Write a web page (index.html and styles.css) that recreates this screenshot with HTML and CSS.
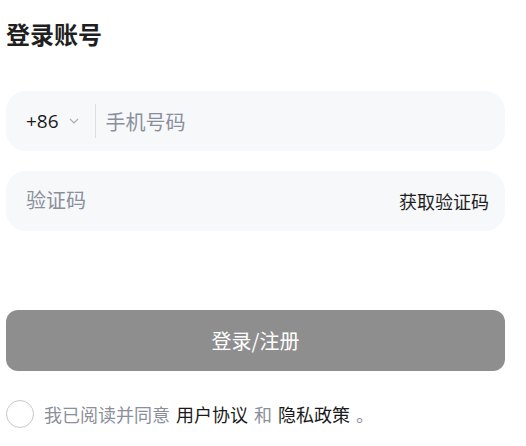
FILE: index.html
```html
<!DOCTYPE html>
<html lang="zh-CN">
<head>
    <meta charset="utf-8">
    <title>登录账号</title>
    <meta name="viewport" content="width=device-width, initial-scale=1">
    <link rel="stylesheet" href="styles.css">
</head>
<body>
    <section class="login">
        <h1>登录账号</h1>
        <form action="#">
            <div class="field">
                <span class="area-code">+86
                    <svg class="chevron" width="10" height="6" viewBox="0 0 10 6"><path d="M1 1l4 4 4-4" fill="none" stroke="#a9acb3" stroke-width="1.2"/></svg>
                </span>
                <span class="divider"></span>
                <input type="tel" placeholder="手机号码">
            </div>
            <div class="field">
                <input type="text" placeholder="验证码" class="code-input">
                <button type="button" class="get-code">获取验证码</button>
            </div>
            <button type="submit" class="submit">登录/注册</button>
            <label class="agree">
                <span class="circle"></span>
                <span class="muted">我已阅读并同意</span>
                <span>用户协议</span>
                <span class="muted">和</span>
                <span>隐私政策</span>
                <span class="muted">。</span>
            </label>
        </form>
    </section>
</body>
</html>
```

FILE: styles.css
```css
* {
    margin: 0;
    padding: 0;
    box-sizing: border-box;
}

body {
    font-family: "Noto Sans CJK SC", "Noto Sans", sans-serif;
    background-color: #fff;
    color: #1a1a1a;
}

.login {
    padding: 14px 21px 0 6px;
}

h1 {
    font-size: 24px;
    font-weight: 700;
    line-height: 40px;
    color: #1f1f1f;
}

form {
    margin-top: 37px;
}

/** Input rows **/
.field {
    display: flex;
    align-items: center;
    height: 60px;
    border-radius: 20px;
    background-color: #f7f8fa;
    padding: 0 16px 0 20px;
    margin-bottom: 20px;
}

.field input {
    flex: 1;
    min-width: 0;
    border: 0;
    outline: 0;
    background: transparent;
    font-family: inherit;
    font-size: 20px;
    color: #1a1a1a;
}

.field input::placeholder {
    color: #8a8f9c;
}

.code-input {
    margin-bottom: 4px;
}

.area-code {
    display: flex;
    align-items: center;
    gap: 10px;
    font-family: "Open Sans", sans-serif;
    font-size: 19px;
    color: #1a1a1a;
}

.divider {
    width: 1px;
    height: 34px;
    background-color: #dcdee2;
    margin: 0 10px 0 16px;
}

.get-code {
    border: 0;
    background: transparent;
    font-family: inherit;
    font-size: 18px;
    color: #1f1f1f;
}

/** Submit **/
.submit {
    display: block;
    width: 100%;
    height: 61px;
    margin-top: 79px;
    border: 0;
    border-radius: 12px;
    background-color: #8e8e8e;
    color: #fff;
    font-family: inherit;
    font-size: 20px;
}

/** Agreement **/
.agree {
    display: flex;
    align-items: center;
    gap: 6px;
    margin-top: 29px;
    font-size: 18px;
    color: #1a1a1a;
}

.circle {
    width: 28px;
    height: 28px;
    border: 1.5px solid #c8c9cc;
    border-radius: 50%;
    margin-right: 4px;
}

.muted {
    color: #8a8f9c;
}
```
